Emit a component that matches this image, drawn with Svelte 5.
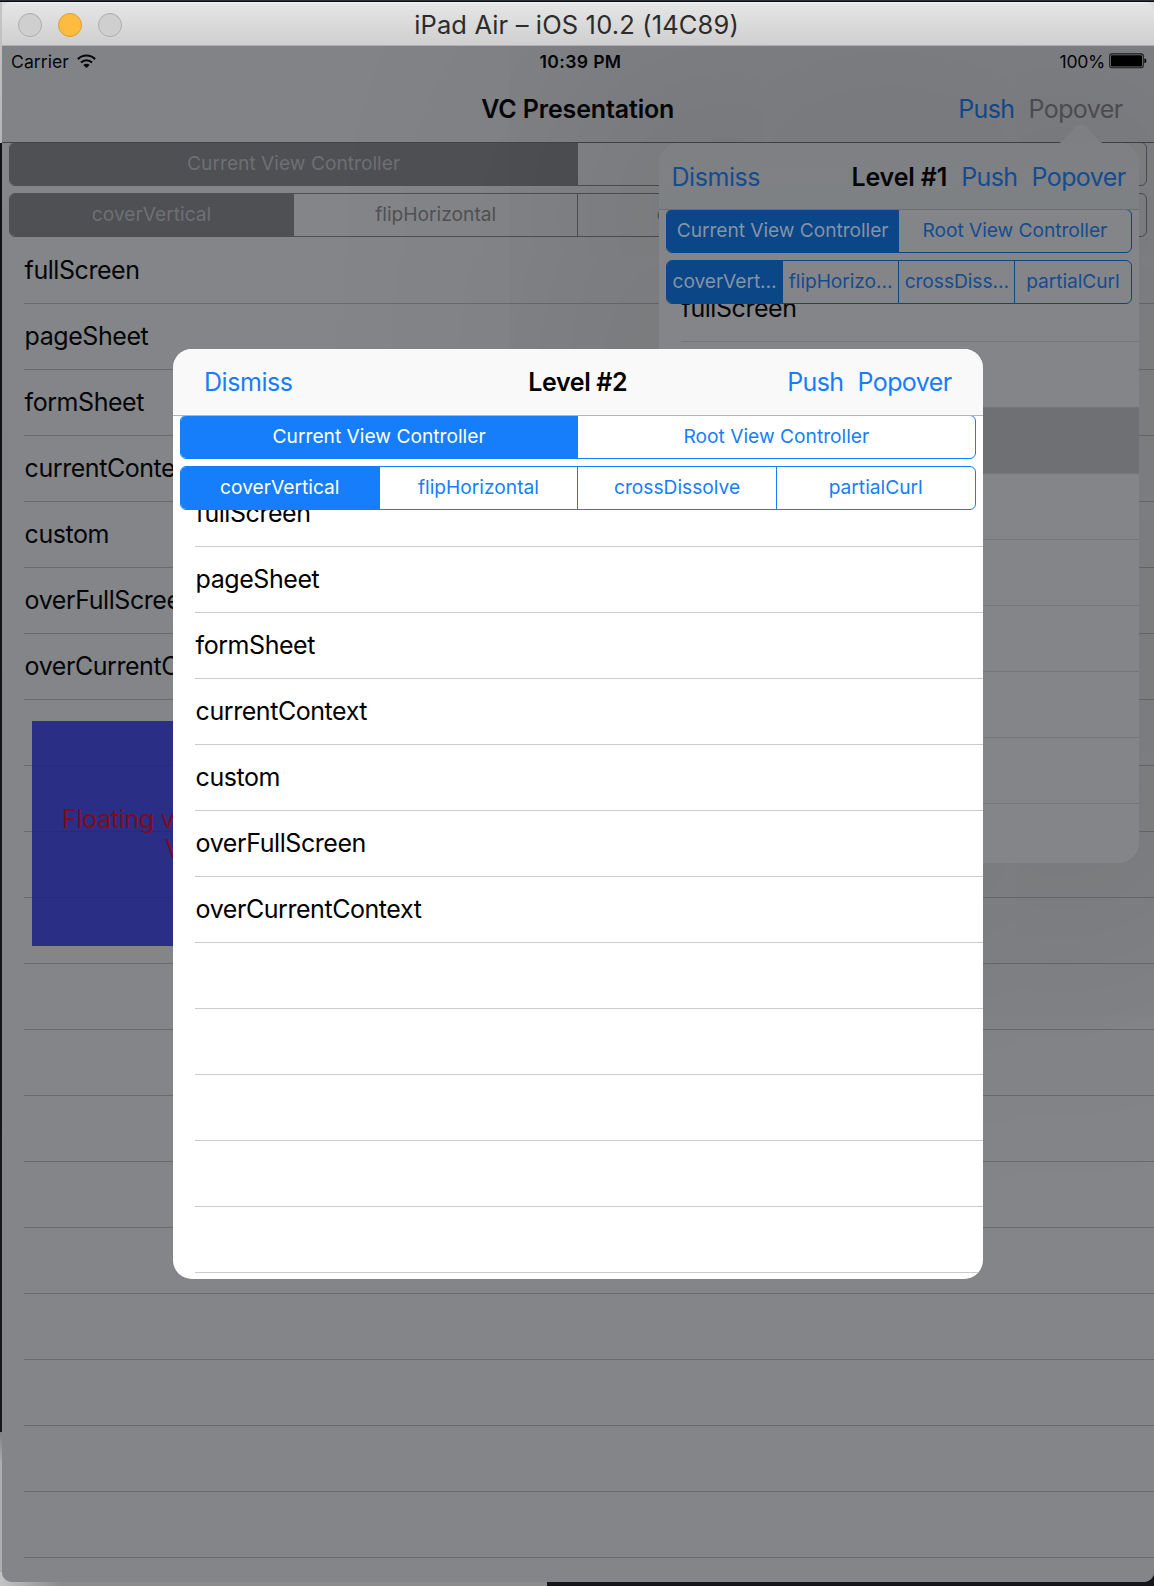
<script>
  const styles = ['fullScreen', 'pageSheet', 'formSheet', 'currentContext', 'custom', 'overFullScreen', 'overCurrentContext'];
  const targets = ['Current View Controller', 'Root View Controller'];
  const transitions = ['coverVertical', 'flipHorizontal', 'crossDissolve', 'partialCurl'];
  const shortTransitions = ['coverVert…', 'flipHorizo…', 'crossDiss…', 'partialCurl'];
  const padded = (count) => Array.from({ length: count }, (_, i) => styles[i] ?? '');
</script>

{#snippet segments(labels)}
  <div class="segments">
    {#each labels as label, i}
      <button class="segment" class:on={i === 0}>{label}</button>
    {/each}
  </div>
{/snippet}

{#snippet controls(second)}
  <div class="controls">
    {@render segments(targets)}
    {@render segments(second)}
  </div>
{/snippet}

{#snippet table(count, selected)}
  <ul class="table">
    {#each padded(count) as name, i}
      <li class:selected={i === selected}><span>{name}</span></li>
    {/each}
  </ul>
{/snippet}

<div class="desktop">
  <div class="window">
    <header class="titlebar">
      <div class="lights"><i></i><i class="amber"></i><i></i></div>
      <h1>iPad Air – iOS 10.2 (14C89)</h1>
    </header>

    <div class="screen">
      <div class="panel root">
        <div class="status">
          <div class="carrier">
            Carrier
            <svg width="19" height="15" viewBox="0 0 19 15" fill="none" stroke="#050608" stroke-width="2.2">
              <path d="M.9 5.1C5.7 .3 13.3 .3 18.1 5.1" />
              <path d="M4 8.5c3.2-3 7.8-3 11 0" />
              <path d="M9.5 14 6.3 10.9c1.9-1.7 4.5-1.7 6.4 0z" fill="#050608" stroke="none" />
            </svg>
          </div>
          <div class="clock">10:39 PM</div>
          <div class="power">
            100%
            <svg width="38" height="16" viewBox="0 0 38 16">
              <rect x=".7" y=".9" width="33.6" height="13.8" rx="2.2" fill="none" stroke="#1c1d1f" stroke-width="1.1" />
              <rect x="2" y="2.2" width="31" height="11.2" rx="1" fill="#000" />
              <path d="M35.4 5.3c1.7.5 2 1.3 2 2.5s-.3 2-2 2.5z" fill="#050608" />
            </svg>
          </div>
        </div>
        <nav class="nav">
          <span></span>
          <h2>VC Presentation</h2>
          <div class="actions"><button>Push</button><button class="disabled">Popover</button></div>
        </nav>
        {@render controls(transitions)}
        {@render table(21, -1)}
      </div>

      <div class="floating"><p>Floating view from</p><p class="last">VC</p></div>

      <div class="popover">
        <svg class="arrow" width="56" height="20" viewBox="0 0 56 20">
          <path d="M0 20C8 20 10 17 13 13.5L23 2.5Q28-2 33 2.5L43 13.5C46 17 48 20 56 20z" fill="#7e7f83" />
        </svg>
        <div class="panel level1">
          <nav class="nav">
            <button>Dismiss</button>
            <h2>Level #1</h2>
            <div class="actions"><button>Push</button><button>Popover</button></div>
          </nav>
          {@render controls(shortTransitions)}
          {@render table(9, 2)}
        </div>
      </div>

      <div class="panel level2">
        <nav class="nav">
          <button>Dismiss</button>
          <h2>Level #2</h2>
          <div class="actions"><button>Push</button><button>Popover</button></div>
        </nav>
        {@render controls(transitions)}
        {@render table(13, -1)}
      </div>
    </div>
  </div>
</div>

<style>
  :global(body) { margin: 0; }
  .desktop {
    box-sizing: border-box;
    width: 1154px;
    height: 1586px;
    padding: 2px 0 4px 2px;
    overflow: hidden;
    font-family: Inter, 'Liberation Sans', sans-serif;
    color: #050608;
    background:
      linear-gradient(#2b3036 50%, #0c0d0f 50%) 0 0 / 100% 2px no-repeat,
      linear-gradient(#c4c6c5, #b4b6b5) 0 2px / 2px 141px no-repeat,
      linear-gradient(#101212, #161818) 0 143px / 2px 1289px no-repeat,
      linear-gradient(#7e807f, #abaeac 30px) 0 1432px / 2px 140px no-repeat,
      linear-gradient(90deg, #c4c4c4, #8d8b8c 60px, #8d8b8c) 0 100% / 547px 14px no-repeat,
      linear-gradient(#dcdcdc, #dcdcdc) 0 2px / 100% 12px no-repeat,
      #15151b;
  }
  .window {
    display: flex;
    flex-direction: column;
    height: 1580px;
    border-radius: 9px 9px 10px 10px;
    overflow: hidden;
  }
  .titlebar {
    box-sizing: border-box;
    flex: none;
    display: grid;
    grid-template-columns: 1fr auto 1fr;
    align-items: center;
    height: 44px;
    padding-left: 16px;
    padding-right: 19px;
    background: linear-gradient(#f3f3f3, #e5e5e5 2px, #cfcfcf);
    border-bottom: 1px solid #b0b0b1;
  }
  .titlebar h1 {
    margin: 2px 0 0;
    font-size: 25.5px;
    line-height: 30px;
    font-weight: 400;
    letter-spacing: 0.14px;
    color: #2c2c2c;
  }
  .lights { display: flex; gap: 16px; padding-top: 2px; }
  .lights i {
    box-sizing: border-box;
    width: 24px;
    height: 24px;
    border: 1px solid #adadad;
    border-radius: 50%;
    background: #cfcfcf;
  }
  .lights .amber { background: #fdbc40; border-color: #df9d33; }

  .screen { position: relative; flex: 1; overflow: hidden; background: #848588; }

  .panel {
    --bg: #848588;
    --bar: #828386;
    --rule: #6a6b6e;
    --bar-rule: #3d3e41;
    --tint: #144c90;
    --fill: #0b4687;
    --on-fill: #8493a6;
    --ink: #050608;
    isolation: isolate;
    color: var(--ink);
    background: var(--bg);
  }
  .root { --tint: #505155; --fill: #4f5054; --on-fill: #6e6f73; --bar-rule: #434447; }
  .status {
    display: grid;
    grid-template-columns: 1fr auto 1fr;
    align-items: center;
    height: 30px;
    padding: 0 7px 0 9px;
    background: var(--bar);
    font-size: 17.6px;
    letter-spacing: 0.05px;
  }
  .carrier { display: flex; align-items: center; gap: 8px; }
  .clock { font-weight: 600; letter-spacing: 0.35px; padding-left: 3px; }
  .power { display: flex; align-items: center; justify-content: flex-end; gap: 4px; letter-spacing: -0.3px; }

  .nav {
    position: relative;
    z-index: 2;
    box-sizing: border-box;
    display: grid;
    grid-template-columns: 1fr auto 1fr;
    align-items: center;
    height: 66px;
    padding: 0 31.5px 0 31px;
    background: var(--bar);
    box-shadow: 0 1px 0 var(--bar-rule);
  }
  h2 { margin: 0; font-size: 25px; font-weight: 600; letter-spacing: -0.15px; }
  button {
    padding: 0;
    border: 0;
    background: none;
    font: inherit;
    white-space: nowrap;
  }
  .nav button { color: var(--tint); font-size: 25px; letter-spacing: -0.6px; text-align: left; }
  .nav > button { letter-spacing: -0.45px; }
  .nav .actions { display: flex; justify-content: flex-end; gap: 14px; }
  .root .actions button { color: #144c90; }
  .root .actions .disabled { color: #505155; }

  .controls {
    position: relative;
    z-index: 1;
    display: flex;
    flex-direction: column;
    gap: 7px;
    padding: 0 7.5px 0 7px;
  }
  .segments {
    box-sizing: border-box;
    display: flex;
    height: 44px;
    border: 1px solid var(--fill);
    border-radius: 6px;
    overflow: hidden;
    background: var(--bg);
  }
  .segment {
    flex: 1 1 0;
    min-width: 0;
    padding-bottom: 2px;
    border-left: 1px solid var(--fill);
    color: var(--tint);
    font-size: 19.2px;
    letter-spacing: 0;
  }
  .segment:first-child, .segment.on + .segment { border-left: 0; }
  .segment.on { padding-right: 1px; background: var(--fill); color: var(--on-fill); }

  .table { margin: 0; padding: 0 0 0 22px; list-style: none; font-size: 25px; letter-spacing: -0.44px; }
  .table li {
    box-sizing: border-box;
    display: flex;
    align-items: center;
    height: 66px;
    padding: 0 0 1px 0.6px;
    border-bottom: 1px solid var(--rule);
  }
  .root .table { margin-top: 1px; }

  .floating {
    position: absolute;
    left: 30px;
    top: 675px;
    box-sizing: border-box;
    width: 300px;
    height: 225px;
    padding: 83px 0 0 30px;
    background: rgba(27, 31, 133, 0.85);
    color: #7f0c1d;
    font-size: 25px;
    line-height: 30px;
    letter-spacing: -0.3px;
  }
  .floating p { margin: 0; white-space: nowrap; }
  .floating .last { padding-left: 103px; }

  .popover {
    position: absolute;
    left: 657px;
    top: 97px;
    width: 480px;
    height: 720px;
    border-radius: 21px;
    box-shadow: 0 0 300px 100px rgba(0, 0, 0, 0.115);
  }
  .arrow { position: absolute; left: 394px; top: -19px; }
  .level1 {
    --bar: linear-gradient(#7f8084, #7e8183);
    --rule: #75767a;
    --bar-rule: #6d6e71;
    height: 100%;
    border-radius: inherit;
    overflow: hidden;
  }
  .level1 .nav { display: flex; padding: 2px 13.5px 0 12.5px; }
  .level1 h2 { margin: 0 14px 0 auto; }
  .level1 .table { margin-top: -28px; }
  .level1 .segment { letter-spacing: -0.06px; }
  .level1 .selected { background: #6f7073; box-shadow: -22px 0 0 #6f7073; }

  .level2 {
    --bg: #fff;
    --bar: #f9f9f9;
    --rule: #cbcbcd;
    --bar-rule: #b3b3b5;
    --tint: #167efb;
    --fill: #167efb;
    --on-fill: #fff;
    --ink: #000;
    position: absolute;
    left: 171px;
    top: 303px;
    width: 810px;
    height: 930px;
    border-radius: 19px;
    overflow: hidden;
  }
  .level2 h2 { letter-spacing: -0.4px; }
  .level2 .table { margin-top: -29px; }
</style>
